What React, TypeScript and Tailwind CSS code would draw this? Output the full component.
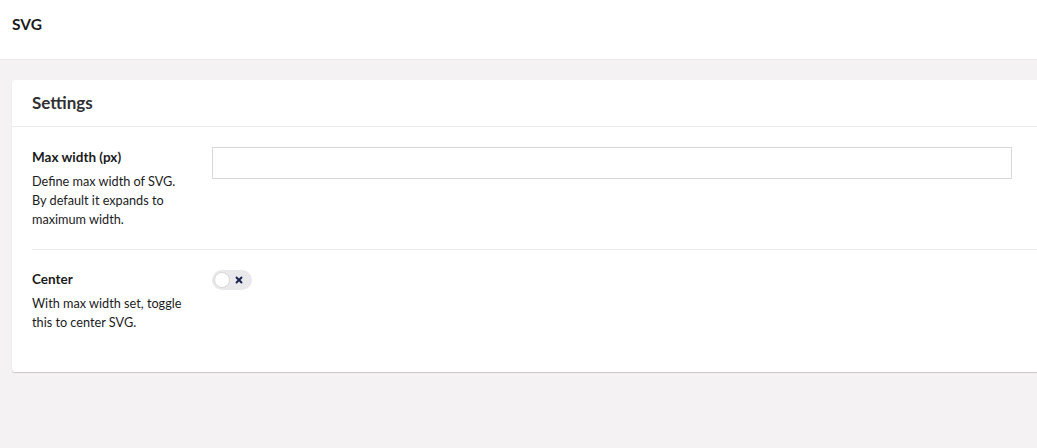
import { X } from 'lucide-react';

const font = { fontFamily: 'Lato, "Noto Sans", sans-serif' };

function PropertyRow({
  label,
  description,
  children,
  last,
}: {
  label: string;
  description: string[];
  children: React.ReactNode;
  last?: boolean;
}) {
  return (
    <div className={`flex ml-5 ${last ? 'pt-[19px] pb-[40px]' : 'pt-[20px] pb-[20px] border-b border-[#ededee]'}`}>
      <div className="w-[180px] shrink-0">
        <div className="text-[13.5px] font-bold leading-[20px] text-[#1b1b1d]">{label}</div>
        <div className="mt-[5px] text-[12.7px] leading-[19px] text-[#1b1b1d]">
          {description.map((line) => (
            <div key={line}>{line}</div>
          ))}
        </div>
      </div>
      <div className="flex-1 min-w-0">{children}</div>
    </div>
  );
}

export default function App() {
  return (
    <div className="min-h-[448px] bg-[#f4f2f3] antialiased overflow-hidden" style={font}>
      <header className="h-[60px] bg-white border-b border-[#e9e9eb] px-3 pt-[14px]">
        <h1 className="text-[15.5px] leading-[20px] font-bold text-[#1b1b1d]">SVG</h1>
      </header>

      <div className="pt-5 pl-3">
        <section className="bg-white rounded-tl-[3px] rounded-bl-[3px] shadow-[0_1px_1px_rgba(0,0,0,0.18)]">
          <div className="h-[47px] px-5 flex items-center border-b border-[#e9e9eb]">
            <h2 className="text-[17px] font-bold text-[#303033]">Settings</h2>
          </div>
          <PropertyRow
            label="Max width (px)"
            description={['Define max width of SVG.', 'By default it expands to', 'maximum width.']}
          >
            <input
              type="text"
              className="block w-full max-w-[800px] h-[32px] border border-[#d8d7d9] bg-white outline-none px-2 text-sm"
            />
          </PropertyRow>
          <PropertyRow
            label="Center"
            description={['With max width set, toggle', 'this to center SVG.']}
            last
          >
            <button className="mt-[1px] w-[40px] h-[20px] rounded-full bg-[#e9e9eb] relative flex items-center">
              <span className="absolute left-[2px] top-[2px] w-[16px] h-[16px] rounded-full bg-white border border-[#d8d7d9]" />
              <X className="absolute right-[8px] w-[10px] h-[10px] text-[#1b264f]" strokeWidth={4.5} />
            </button>
          </PropertyRow>
        </section>
      </div>
    </div>
  );
}
